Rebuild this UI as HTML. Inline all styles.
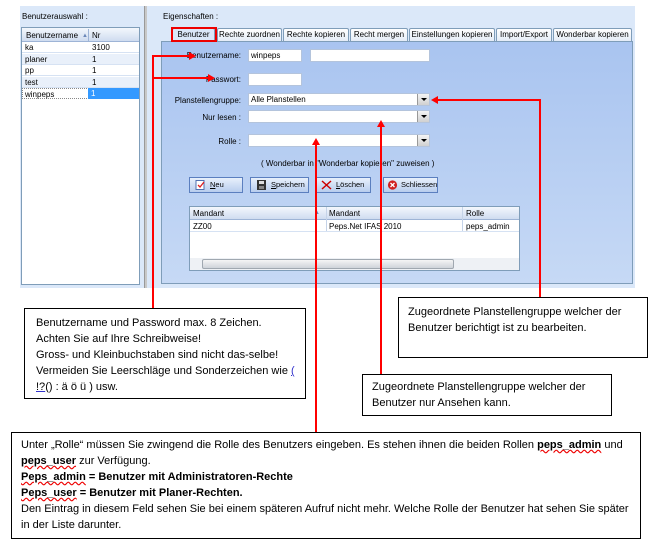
<!DOCTYPE html>
<html><head><meta charset="utf-8"><style>
*{margin:0;padding:0;box-sizing:border-box}
body{width:655px;height:546px;background:#fff;position:relative;overflow:hidden;font-family:"Liberation Sans",sans-serif;font-size:8px;color:#000}
.a{position:absolute}
.ui{font-size:8px;white-space:nowrap}
.lb{position:absolute;right:414px;font-size:8px;white-space:nowrap}
.tab{position:absolute;top:28px;height:13px;background:linear-gradient(#fff,#e4ecf7);border:1px solid #7f9db9;border-bottom:none;border-radius:2px 2px 0 0;text-align:center;line-height:12px;font-size:8px;white-space:nowrap;overflow:hidden}
.inp{position:absolute;background:#fff;border:1px solid #b4c4dc;height:13px;font-size:8px;line-height:11px;padding-left:2px}
.cb{position:absolute;right:0;top:0;width:12px;height:11px;background:linear-gradient(#f4f4f4,#d0d0d0);border-left:1px solid #999}
.cb:after{content:"";position:absolute;left:3px;top:4px;border:3px solid transparent;border-top:3px solid #000;border-bottom:none}
.btn{position:absolute;top:177px;height:16px;border:1px solid #5b7fbf;background:linear-gradient(#e8f0fb,#b8cdee);font-size:7.5px;line-height:14px;padding-left:20px;white-space:nowrap;overflow:hidden}
.ic{position:absolute;left:5px;top:2px;width:11px;height:10px}
.box{position:absolute;border:1px solid #000;background:#fff;font-size:11px;line-height:16px;padding-left:11px}
.r{position:absolute;background:#f00}
.row{position:absolute;left:0;width:117px;height:11px;font-size:8px;line-height:11px;border-bottom:1px solid #d6e2f3}
</style></head><body>
<div class="a" style="left:20px;top:6px;width:124px;height:282px;background:#dbe8f9"></div>
<div class="a" style="left:144px;top:6px;width:3px;height:282px;background:#c8c8c8;border-left:1px solid #999"></div>
<div class="a ui" style="left:22px;top:12px">Benutzerauswahl :</div>
<div class="a" style="left:21px;top:27px;width:119px;height:258px;background:#fff;border:1px solid #7f9db9">
 <div class="a" style="left:0;top:0;width:117px;height:14px;background:linear-gradient(#f3f7fd,#cfdcf0);border-bottom:1px solid #9eb4d6"></div>
 <div class="a ui" style="left:4px;top:3px">Benutzername</div>
 <div class="a" style="left:60px;top:5px;color:#6a87b8;font-size:6px">▲</div>
 <div class="a" style="left:66px;top:1px;width:1px;height:12px;background:#9eb4d6"></div>
 <div class="a ui" style="left:70px;top:3px">Nr</div>
 <div class="row" style="top:14px;background:#fff"><span style="margin-left:3px">ka</span><span class="a" style="left:70px">3100</span></div>
 <div class="row" style="top:26px;background:#e9f0fa"><span style="margin-left:3px">planer</span><span class="a" style="left:70px">1</span></div>
 <div class="row" style="top:37px;background:#fff"><span style="margin-left:3px">pp</span><span class="a" style="left:70px">1</span></div>
 <div class="row" style="top:49px;background:#e9f0fa"><span style="margin-left:3px">test</span><span class="a" style="left:70px">1</span></div>
 <div class="row" style="top:60px;background:#fff;border:1px dotted #888"><span style="margin-left:2px">winpeps</span></div>
 <div class="a" style="left:66px;top:60px;width:51px;height:11px;background:#3399ff;color:#fff;line-height:11px;padding-left:3px">1</div>
</div>
<div class="a" style="left:147px;top:6px;width:488px;height:282px;background:#dbe8f9"></div>
<div class="a ui" style="left:163px;top:12px">Eigenschaften :</div>
<div class="a" style="left:161px;top:41px;width:472px;height:243px;background:linear-gradient(#a9c4f0,#c6d9f5);border:1px solid #7f9db9"></div>
<div class="tab" style="left:172px;width:43px;background:#dbe7f8">Benutzer</div>
<div class="tab" style="left:217px;width:65px">Rechte zuordnen</div>
<div class="tab" style="left:283px;width:66px">Rechte kopieren</div>
<div class="tab" style="left:350px;width:58px">Recht mergen</div>
<div class="tab" style="left:409px;width:86px">Einstellungen kopieren</div>
<div class="tab" style="left:496px;width:56px">Import/Export</div>
<div class="tab" style="left:553px;width:79px">Wonderbar kopieren</div>
<div class="a" style="left:171px;top:27px;width:46px;height:15px;border:2px solid #e00"></div>

<div class="lb" style="top:51px">Benutzername:</div>
<div class="inp" style="left:248px;top:49px;width:54px">winpeps</div>
<div class="inp" style="left:310px;top:49px;width:120px"></div>
<div class="lb" style="top:75px">Passwort:</div>
<div class="inp" style="left:248px;top:73px;width:54px"></div>
<div class="lb" style="top:96px">Planstellengruppe:</div>
<div class="inp" style="left:248px;top:93px;width:182px">Alle Planstellen<div class="cb"></div></div>
<div class="lb" style="top:113px">Nur lesen :</div>
<div class="inp" style="left:248px;top:110px;width:182px"><div class="cb"></div></div>
<div class="lb" style="top:137px">Rolle :</div>
<div class="inp" style="left:248px;top:134px;width:182px"><div class="cb"></div></div>
<div class="a ui" style="left:261px;top:159px">( Wonderbar in "Wonderbar kopieren" zuweisen )</div>

<div class="btn" style="left:189px;width:54px"><svg class="ic" viewBox="0 0 11 10"><rect x="1" y="0.5" width="8" height="9" fill="#fff" stroke="#5070b0"/><path d="M3 5l2 2 4-5" stroke="#e02020" fill="none" stroke-width="1.3"/></svg><u>N</u>eu</div>
<div class="btn" style="left:250px;width:59px"><svg class="ic" viewBox="0 0 11 10"><rect x="1" y="0" width="9" height="10" fill="#333"/><rect x="3" y="1" width="5" height="3" fill="#ddd"/><rect x="3" y="6" width="5" height="3" fill="#888"/></svg><u>S</u>peichern</div>
<div class="btn" style="left:315px;width:56px"><svg class="ic" viewBox="0 0 11 10"><path d="M1 1l9 8M10 1L1 9" stroke="#c00" stroke-width="1.5"/></svg><u>L</u>öschen</div>
<div class="btn" style="left:383px;width:55px;padding-left:17px"><svg class="ic" style="left:3px" viewBox="0 0 11 10"><circle cx="5.5" cy="5" r="4.6" fill="#d02020"/><path d="M3.5 3l4 4M7.5 3l-4 4" stroke="#fff" stroke-width="1.3"/></svg>Schliessen</div>

<div class="a" style="left:189px;top:206px;width:331px;height:65px;background:#fff;border:1px solid #7f9db9">
 <div class="a" style="left:0;top:0;width:329px;height:13px;background:linear-gradient(#f3f7fd,#cfdcf0);border-bottom:1px solid #9eb4d6"></div>
 <div class="a ui" style="left:3px;top:2px">Mandant</div>
 <div class="a" style="left:124px;top:3px;color:#6a87b8;font-size:6px">▲</div>
 <div class="a" style="left:136px;top:0;width:1px;height:25px;background:#c5d3e8"></div>
 <div class="a ui" style="left:139px;top:2px">Mandant</div>
 <div class="a" style="left:272px;top:0;width:1px;height:25px;background:#c5d3e8"></div>
 <div class="a ui" style="left:276px;top:2px">Rolle</div>
 <div class="a ui" style="left:3px;top:15px">ZZ00</div>
 <div class="a ui" style="left:139px;top:15px">Peps.Net IFAS 2010</div>
 <div class="a ui" style="left:276px;top:15px">peps_admin</div>
 <div class="a" style="left:0;top:24px;width:329px;height:1px;background:#d6e2f3"></div>
 <div class="a" style="left:0;top:51px;width:329px;height:12px;background:#eef1f5"></div>
 <div class="a" style="left:12px;top:52px;width:252px;height:10px;background:linear-gradient(#f5f5f5,#cfd4da);border:1px solid #a0a8b0;border-radius:2px"></div>
</div>

<div class="r" style="left:152px;top:55px;width:2px;height:254px"></div>
<div class="r" style="left:152px;top:55px;width:38px;height:2px"></div>
<div class="a" style="left:189px;top:52px;border-left:7px solid #f00;border-top:4px solid transparent;border-bottom:4px solid transparent"></div>
<div class="r" style="left:152px;top:77px;width:57px;height:2px"></div>
<div class="a" style="left:208px;top:74px;border-left:7px solid #f00;border-top:4px solid transparent;border-bottom:4px solid transparent"></div>
<div class="r" style="left:539px;top:99px;width:2px;height:198px"></div>
<div class="r" style="left:438px;top:99px;width:102px;height:2px"></div>
<div class="a" style="left:431px;top:96px;border-right:7px solid #f00;border-top:4px solid transparent;border-bottom:4px solid transparent"></div>
<div class="r" style="left:380px;top:127px;width:2px;height:247px"></div>
<div class="a" style="left:377px;top:120px;border-bottom:7px solid #f00;border-left:4px solid transparent;border-right:4px solid transparent"></div>
<div class="r" style="left:315px;top:145px;width:2px;height:287px"></div>
<div class="a" style="left:312px;top:138px;border-bottom:7px solid #f00;border-left:4px solid transparent;border-right:4px solid transparent"></div>

<div class="box" style="left:24px;top:308px;width:282px;height:91px;padding-top:6px">Benutzername und Password max. 8 Zeichen.<br>Achten Sie auf Ihre Schreibweise!<br>Gross- und Kleinbuchstaben sind nicht das-selbe!<br>Vermeiden Sie Leerschläge und Sonderzeichen wie <u style="color:#33c">(</u><br><u style="text-decoration-color:#33c">!?</u>() : ä ö ü ) usw.</div>
<div class="box" style="left:398px;top:297px;width:250px;height:61px;padding-top:6px;padding-left:9px">Zugeordnete Planstellengruppe welcher der<br>Benutzer berichtigt ist zu bearbeiten.</div>
<div class="box" style="left:362px;top:374px;width:250px;height:42px;padding-top:4px;padding-left:9px">Zugeordnete Planstellengruppe welcher der<br>Benutzer nur Ansehen kann.</div>
<div class="box" style="left:11px;top:432px;width:630px;height:107px;padding-top:4px;padding-left:9px">Unter „Rolle“ müssen Sie zwingend die Rolle des Benutzers eingeben. Es stehen ihnen die beiden Rollen <b style="text-decoration:underline wavy #e00">peps_admin</b> und<br><b style="text-decoration:underline wavy #e00">peps_user</b> zur Verfügung.<br><b><span style="text-decoration:underline wavy #e00">Peps_admin</span> = Benutzer mit Administratoren-Rechte</b><br><b><span style="text-decoration:underline wavy #e00">Peps_user</span> = Benutzer mit Planer-Rechten.</b><br>Den Eintrag in diesem Feld sehen Sie bei einem späteren Aufruf nicht mehr. Welche Rolle der Benutzer hat sehen Sie später<br>in der Liste darunter.</div>
</body></html>
